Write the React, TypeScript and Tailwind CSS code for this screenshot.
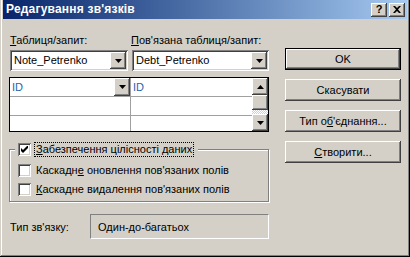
import React from "react";

const raised =
  "shadow-[inset_-1px_-1px_#404040,inset_1px_1px_#ffffff,inset_-2px_-2px_#808080,inset_2px_2px_#d4d0c8]";
const sunken =
  "shadow-[inset_1px_1px_#808080,inset_-1px_-1px_#ffffff,inset_2px_2px_#404040,inset_-2px_-2px_#d4d0c8]";

function Arrow({ up = false }: { up?: boolean }) {
  return (
    <svg width="7" height="4" viewBox="0 0 7 4" className={up ? "rotate-180" : ""}>
      <path d="M0 0h7L3.5 4z" fill="#000" />
    </svg>
  );
}

function DropButton({ className = "" }: { className?: string }) {
  return (
    <div className={`w-[16px] bg-[#d4d0c8] flex items-center justify-center ${raised} ${className}`}>
      <Arrow />
    </div>
  );
}

function Combo({ text, width }: { text: string; width: string }) {
  return (
    <div className={`${width} h-[21px] bg-white flex p-[2px] ${sunken}`}>
      <div className="flex-1 pl-[2px] leading-[17px]">{text}</div>
      <DropButton className="h-[17px]" />
    </div>
  );
}

function CheckBox({ checked = false }: { checked?: boolean }) {
  return (
    <div className={`w-[13px] h-[13px] bg-white flex items-center justify-center shrink-0 ${sunken}`}>
      {checked && (
        <svg width="7" height="7" viewBox="0 0 7 7">
          <path d="M0 2v3l2 2 5-5V-1L2 4z" fill="#000" />
        </svg>
      )}
    </div>
  );
}

function Button({ children, isDefault = false }: { children: React.ReactNode; isDefault?: boolean }) {
  return (
    <div
      className={`h-[22px] w-[116px] flex items-center justify-center bg-[#d4d0c8] ${
        isDefault
          ? "shadow-[inset_0_0_0_1px_#000000,inset_-2px_-2px_#404040,inset_2px_2px_#ffffff,inset_-3px_-3px_#808080]"
          : raised
      }`}
    >
      {children}
    </div>
  );
}

export default function App() {
  return (
    <div className="w-[410px] h-[257px] bg-[#d4d0c8] flex flex-col overflow-hidden text-[11px] leading-[13px] text-black font-['Liberation_Sans',Arial,sans-serif] shadow-[inset_-1px_-1px_#000000,inset_1px_0_#d4d0c8,inset_-2px_-2px_#808080,inset_2px_0_#ffffff]">
      {/* Title bar */}
      <div className="mx-[3px] h-[19px] shrink-0 flex items-center bg-gradient-to-r from-[#0a246a] to-[#a6caf0] pl-[3px] pr-[2px]">
        <div className="flex-1 text-white font-bold text-[12px] tracking-[0.2px]">Редагування зв'язків</div>
        <div className={`w-[16px] h-[14px] bg-[#d4d0c8] flex items-center justify-center font-bold text-[11px] ${raised}`}>?</div>
        <div className={`ml-[2px] w-[16px] h-[14px] bg-[#d4d0c8] flex items-center justify-center ${raised}`}>
          <svg width="8" height="7" viewBox="0 0 8 7">
            <path d="M0 0h2l2 2 2-2h2L5 3.5 8 7H6L4 5 2 7H0l3-3.5z" fill="#000" />
          </svg>
        </div>
      </div>

      {/* Body */}
      <div className="flex pl-[9px] pt-[15px]">
        <div className="w-[260px] flex flex-col">
          <div className="flex pl-[1px]">
            <div className="w-[121px]">
              <span className="underline">Т</span>аблиця/запит:
            </div>
            <div>
              <span className="underline">П</span>ов'язана таблиця/запит:
            </div>
          </div>
          <div className="flex gap-[4px] pl-[1px] mt-[3px]">
            <Combo text="Note_Petrenko" width="w-[118px]" />
            <Combo text="Debt_Petrenko" width="w-[137px]" />
          </div>

          {/* Field grid */}
          <div className="mt-[6px] h-[55px] flex bg-white border border-black">
            <div className="flex-1 flex flex-col">
              <div className="h-[19px] flex border-b border-[#a0a0a0]">
                <div className="w-[121px] flex border-r border-[#a0a0a0]">
                  <div className="flex-1 pl-[2px] leading-[18px] text-[#1f63ad]">ID</div>
                  <DropButton className="h-[18px]" />
                </div>
                <div className="flex-1 pl-[2px] leading-[18px] text-[#1f63ad]">ID</div>
              </div>
              <div className="h-[19px] flex border-b border-[#a0a0a0]">
                <div className="w-[121px] border-r border-[#a0a0a0]" />
                <div className="flex-1" />
              </div>
              <div className="flex-1 flex">
                <div className="w-[121px] border-r border-[#a0a0a0]" />
                <div className="flex-1" />
              </div>
            </div>
            <div className="w-[16px] flex flex-col">
              <div className={`h-[17px] flex items-center justify-center bg-[#d4d0c8] ${raised}`}>
                <Arrow up />
              </div>
              <div className={`h-[15px] bg-[#d4d0c8] ${raised}`} />
              <div className="flex-1 bg-[repeating-conic-gradient(#d4d0c8_0_25%,#ffffff_0_50%)] bg-[length:2px_2px]" />
              <div className={`h-[17px] flex items-center justify-center bg-[#d4d0c8] ${raised}`}>
                <Arrow />
              </div>
            </div>
          </div>

          {/* Group */}
          <div className="relative mt-[11px] h-[60px]">
            <div className="absolute left-0 right-0 top-[6px] bottom-[1px] border border-[#808080] shadow-[inset_1px_1px_#ffffff,1px_1px_#ffffff]" />
            <div className="relative flex items-center gap-[4px] ml-[6px] pl-[3px] pr-[5px] w-fit bg-[#d4d0c8]">
              <CheckBox checked />
              <div className="outline outline-1 outline-dotted outline-black px-[1px] leading-[13px]">
                <span className="underline">З</span>абезпечення цілісності даних
              </div>
            </div>
            <div className="relative flex items-center gap-[5px] ml-[9px] mt-[8px]">
              <CheckBox />
              <div>
                Каскадн<span className="underline">е</span> оновлення пов'язаних полів
              </div>
            </div>
            <div className="relative flex items-center gap-[5px] ml-[9px] mt-[6px]">
              <CheckBox />
              <div>
                <span className="underline">К</span>аскадне видалення пов'язаних полів
              </div>
            </div>
          </div>

          {/* Relationship type */}
          <div className="flex items-center mt-[11px]">
            <div className="w-[81px] pl-[1px] pt-[2px]">Тип зв'язку:</div>
            <div className="flex-1 h-[25px] pl-[7px] pt-[6px] border-t border-l border-[#808080] border-r border-b border-r-white border-b-white">
              Один-до-багатьох
            </div>
          </div>
        </div>

        {/* Buttons */}
        <div className="ml-[16px] mt-[14px] flex flex-col gap-[9px]">
          <Button isDefault>OK</Button>
          <Button>Скасувати</Button>
          <Button>
            <span>
              Тип о<span className="underline">б</span>'єднання...
            </span>
          </Button>
          <Button>
            <span>
              <span className="underline">С</span>творити...
            </span>
          </Button>
        </div>
      </div>
    </div>
  );
}
